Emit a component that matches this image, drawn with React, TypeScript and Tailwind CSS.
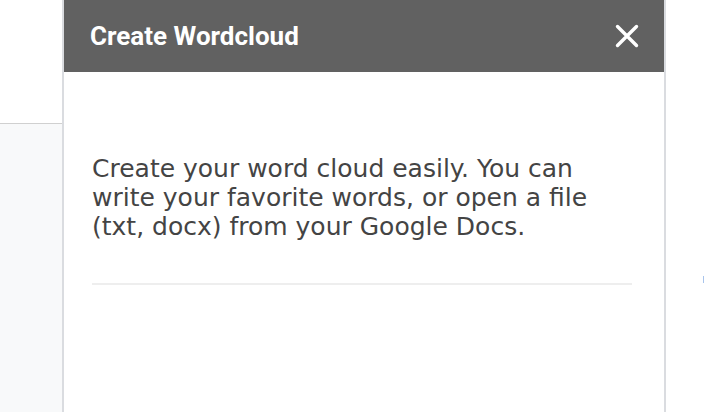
export default function App() {
  return (
    <div className="flex h-[412px] w-[704px] overflow-hidden bg-white">
      {/* left page strip */}
      <div className="flex w-[62px] shrink-0 flex-col">
        <div className="h-[124px] border-b border-[#d0d0d0] bg-white" />
        <div className="flex-1 bg-[#f8f9fa]" />
      </div>

      {/* sidebar panel */}
      <div className="flex w-[604px] shrink-0 flex-col border-x-2 border-[#dadce0] bg-white">
        <div className="flex h-[72px] items-center justify-between bg-[#616161] pl-[26px] pr-[24px]">
          <h1
            className="text-[26px] font-bold text-white"
            style={{ fontFamily: "Roboto, 'Liberation Sans', sans-serif" }}
          >
            Create Wordcloud
          </h1>
          <svg width="26" height="26" viewBox="0 0 26 26" className="text-white">
            <path d="M3.5 3.5 L22.5 22.5 M22.5 3.5 L3.5 22.5" stroke="currentColor" strokeWidth="3.4" strokeLinecap="round" />
          </svg>
        </div>
        <div className="pl-[28px] pr-[32px] pt-[82px]">
          <p
            className="text-[25px] leading-[29px] text-[#444444]"
            style={{ fontFamily: "'DejaVu Sans', Verdana, sans-serif" }}
          >
            Create your word cloud easily. You can write your favorite words, or open a file (txt, docx) from your Google Docs.
          </p>
          <div className="mt-[42px] h-[2px] bg-[#eeeeee]" />
        </div>
      </div>

      {/* right page strip */}
      <div className="relative flex-1 bg-white">
        <div className="absolute right-0 top-[276px] h-[7px] w-[1px] bg-[#a8c4ec]" />
      </div>
    </div>
  );
}
